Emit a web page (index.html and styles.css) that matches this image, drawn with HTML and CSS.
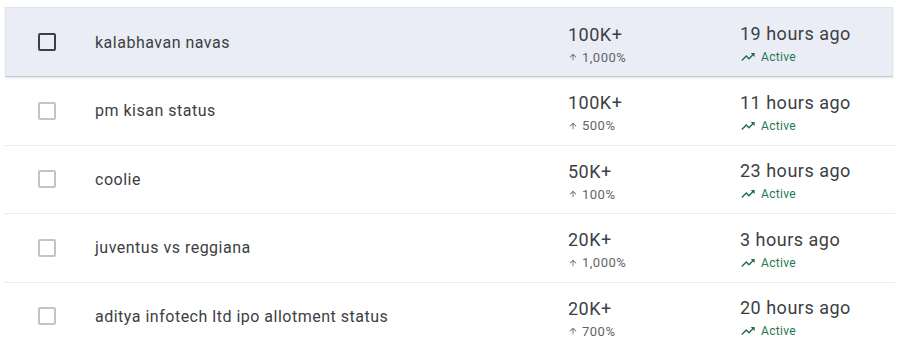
FILE: index.html
```html
<!DOCTYPE html>
<html>
<head>
<meta charset="utf-8">
<link rel="stylesheet" href="styles.css">
</head>
<body>
<div class="list">
  <div class="row selected">
    <div class="cb-cell"><span class="cb"></span></div>
    <div class="title">kalabhavan navas</div>
    <div class="vol"><div class="big">100K+</div><div class="sub"><svg class="up" viewBox="0 0 24 24"><path d="M4 12l1.41 1.41L11 7.83V20h2V7.83l5.58 5.59L20 12l-8-8-8 8z"/></svg>1,000%</div></div>
    <div class="time"><div class="big">19 hours ago</div><div class="active"><svg class="trend" viewBox="0 0 24 24"><path d="M16 6l2.29 2.29-4.88 4.88-4-4L2 16.59 3.41 18l6-6 4 4 6.3-6.29L22 12V6z"/></svg>Active</div></div>
  </div>
  <div class="row">
    <div class="cb-cell"><span class="cb"></span></div>
    <div class="title">pm kisan status</div>
    <div class="vol"><div class="big">100K+</div><div class="sub"><svg class="up" viewBox="0 0 24 24"><path d="M4 12l1.41 1.41L11 7.83V20h2V7.83l5.58 5.59L20 12l-8-8-8 8z"/></svg>500%</div></div>
    <div class="time"><div class="big">11 hours ago</div><div class="active"><svg class="trend" viewBox="0 0 24 24"><path d="M16 6l2.29 2.29-4.88 4.88-4-4L2 16.59 3.41 18l6-6 4 4 6.3-6.29L22 12V6z"/></svg>Active</div></div>
  </div>
  <div class="row">
    <div class="cb-cell"><span class="cb"></span></div>
    <div class="title">coolie</div>
    <div class="vol"><div class="big">50K+</div><div class="sub"><svg class="up" viewBox="0 0 24 24"><path d="M4 12l1.41 1.41L11 7.83V20h2V7.83l5.58 5.59L20 12l-8-8-8 8z"/></svg>100%</div></div>
    <div class="time"><div class="big">23 hours ago</div><div class="active"><svg class="trend" viewBox="0 0 24 24"><path d="M16 6l2.29 2.29-4.88 4.88-4-4L2 16.59 3.41 18l6-6 4 4 6.3-6.29L22 12V6z"/></svg>Active</div></div>
  </div>
  <div class="row">
    <div class="cb-cell"><span class="cb"></span></div>
    <div class="title">juventus vs reggiana</div>
    <div class="vol"><div class="big">20K+</div><div class="sub"><svg class="up" viewBox="0 0 24 24"><path d="M4 12l1.41 1.41L11 7.83V20h2V7.83l5.58 5.59L20 12l-8-8-8 8z"/></svg>1,000%</div></div>
    <div class="time"><div class="big">3 hours ago</div><div class="active"><svg class="trend" viewBox="0 0 24 24"><path d="M16 6l2.29 2.29-4.88 4.88-4-4L2 16.59 3.41 18l6-6 4 4 6.3-6.29L22 12V6z"/></svg>Active</div></div>
  </div>
  <div class="row last">
    <div class="cb-cell"><span class="cb"></span></div>
    <div class="title">aditya infotech ltd ipo allotment status</div>
    <div class="vol"><div class="big">20K+</div><div class="sub"><svg class="up" viewBox="0 0 24 24"><path d="M4 12l1.41 1.41L11 7.83V20h2V7.83l5.58 5.59L20 12l-8-8-8 8z"/></svg>700%</div></div>
    <div class="time"><div class="big">20 hours ago</div><div class="active"><svg class="trend" viewBox="0 0 24 24"><path d="M16 6l2.29 2.29-4.88 4.88-4-4L2 16.59 3.41 18l6-6 4 4 6.3-6.29L22 12V6z"/></svg>Active</div></div>
  </div>
</div>
</body>
</html>
```
FILE: styles.css
```css
html, body { margin: 0; padding: 0; background: #fff; }
body { font-family: Roboto, "Noto Sans", sans-serif; color: #3c4043; }
.list { padding: 7px 5px 0 4px; }
.row {
  display: grid;
  grid-template-columns: 91px 473px 172px 1fr;
  align-items: center;
  height: 67.5px;
  border-bottom: 1px solid #ebebeb;
}
.row.selected {
  height: 68px;
  background: #ebedf6;
  border: 1px solid #e3e5ee;
  border-bottom: 1px solid #c9cbd2;
  box-shadow: 0 1px 2px rgba(60,64,67,0.15);
  margin: 0 2px 0 1px;
  grid-template-columns: 89px 473px 172px 1fr;
  position: relative;
}
.cb-cell { display: flex; padding-left: 34px; }
.row.selected .cb-cell { padding-left: 32px; }
.cb {
  width: 14px; height: 14px;
  border: 2px solid #c4c4c4;
  border-radius: 2px;
  display: block;
}
.selected .cb { border-color: #3c4043; }
.title { font-size: 16px; color: #3c4043; letter-spacing: 0.5px; }
.vol, .time { padding-top: 4px; }
.big { font-size: 18px; color: #3c4043; line-height: 22px; letter-spacing: 0.5px; }
.sub { font-size: 13px; color: #5f6368; margin-top: 4px; display: flex; align-items: center; gap: 4px; letter-spacing: 0.5px; }
.up { width: 10px; height: 10px; fill: #5f6368; }
.active { font-size: 12px; color: #237a4f; margin-top: 4px; display: flex; align-items: center; gap: 5px; letter-spacing: 0.3px; }
.trend { width: 16px; height: 16px; fill: #1f6e46; }
```
